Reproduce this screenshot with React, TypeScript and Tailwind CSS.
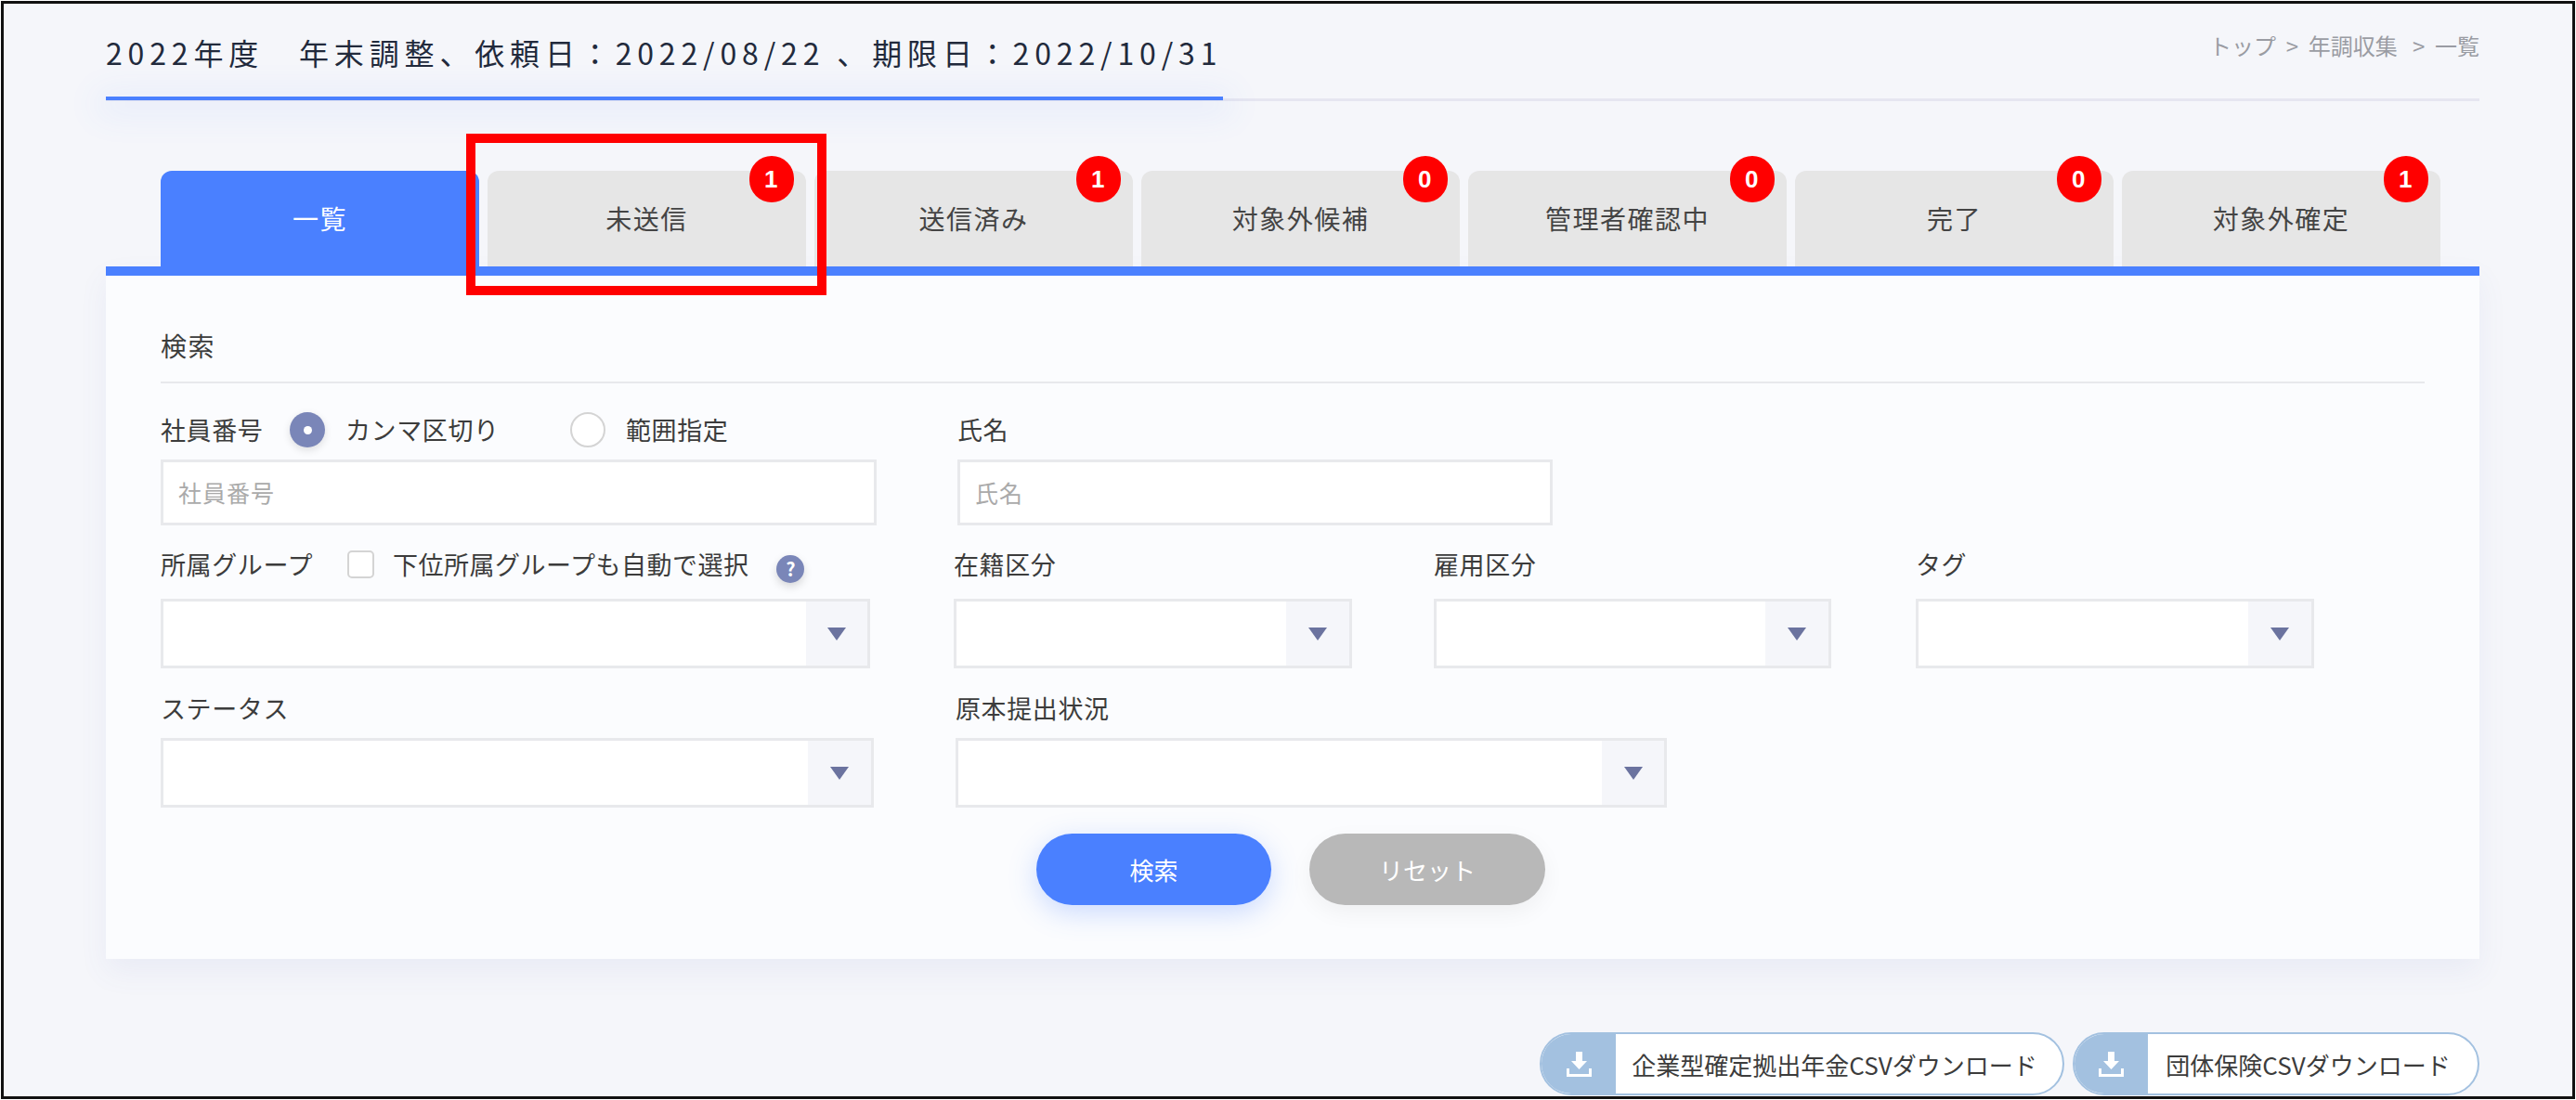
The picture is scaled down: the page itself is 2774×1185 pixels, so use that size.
const font = { fontFamily: '"Noto Sans CJK JP", "Noto Sans", sans-serif' };

const tabs = [
  { label: "一覧", active: true },
  { label: "未送信", count: 1 },
  { label: "送信済み", count: 1 },
  { label: "対象外候補", count: 0 },
  { label: "管理者確認中", count: 0 },
  { label: "完了", count: 0 },
  { label: "対象外確定", count: 1 },
];

const Tab = ({ label, count, active }: { label: string; count?: number; active?: boolean }) => (
  <div
    className={
      active
        ? "relative w-[343px] h-[103px] pb-[2px] flex items-center justify-center rounded-t-[12px] bg-[#4a80ff] text-white text-[28px] tracking-[1.5px]"
        : "relative w-[343px] h-[103px] pb-[2px] flex items-center justify-center rounded-t-[12px] bg-[#e6e6e6] text-[#444444] text-[28px] tracking-[1.5px]"
    }
  >
    {label}
    {count !== undefined && (
      <span className="absolute right-[13px] top-[-16px] w-[48px] h-[50px] rounded-full bg-[#ff0000] text-white text-[26px] font-bold flex items-center justify-center font-['Liberation_Sans']">
        {count}
      </span>
    )}
  </div>
);

const Select = ({ className, arrow }: { className: string; arrow: string }) => (
  <div className={"h-[75px] flex justify-end bg-white border-[3px] border-[#e8e9ec] " + className}>
    <div className={"h-full bg-[#f5f6fa] flex items-center justify-center " + arrow}>
      <svg width="20" height="16" viewBox="0 0 20 16">
        <path d="M0 1h20L10 15z" fill="#6b739f" />
      </svg>
    </div>
  </div>
);

const Label = ({ className, children }: { className?: string; children: React.ReactNode }) => (
  <div className={"text-[27px] leading-[36px] tracking-[0.6px] text-[#3c3c3c] " + (className ?? "")}>{children}</div>
);

const DownloadIcon = () => (
  <svg width="27" height="27" viewBox="0 0 27 27">
    <path d="M10 0h7v10h5l-8.500 9-8.500-9h5z" fill="#ffffff" />
    <path d="M1.500 18v7.500h24V18" fill="none" stroke="#ffffff" strokeWidth="3" />
  </svg>
);

const DownloadButton = ({ label, className, icon }: { label: string; className: string; icon: string }) => (
  <div className={"h-[68px] flex overflow-hidden shrink-0 rounded-full border-[2px] border-[#a3c1e0] bg-white " + className}>
    <div className={"h-full bg-[#a3c1e0] flex items-center justify-center shrink-0 " + icon}>
      <DownloadIcon />
    </div>
    <div className="flex-1 flex items-center justify-center pr-[10px] text-[26px] whitespace-nowrap text-[#3c3c3c]">{label}</div>
  </div>
);

export default function App() {
  return (
    <div style={font} className="relative w-[2774px] h-[1185px] overflow-hidden bg-white p-[1px]">
      <div className="h-[1183px] overflow-hidden border-[3px] border-[#111111] bg-[#f5f6fa] pl-[110px] pr-[100px]">
        <div className="flex justify-between border-b-[3px] border-[#e6e6f0] h-[105px]">
          <div className="w-[1203px] h-[104px] flex flex-col justify-end">
            <div className="text-[32px] leading-[44px] tracking-[5.85px] text-[#222a3c] whitespace-nowrap mb-[26px]">
              2022年度　年末調整、依頼日：2022/08/22 、期限日：2022/10/31
            </div>
            <div className="h-[4px] bg-[#4a80ff] shadow-[0_6px_36px_10px_rgba(74,128,255,0.09)]" />
          </div>
          <div className="pt-[25px] text-[24px] leading-[40px] text-[#9a9ca3] whitespace-pre">トップ  &gt;  年調収集   &gt;  一覧</div>
        </div>

        <div className="pl-[59px] pt-[75px] flex gap-[9px]">
          {tabs.map((t) => (
            <Tab key={t.label} {...t} />
          ))}
        </div>

        <div className="h-[746px] border-t-[10px] border-[#4a80ff] bg-[#fbfcfe] pl-[59px] pr-[59px] pt-[56px] shadow-[0_14px_30px_rgba(80,100,180,0.07)]">
          <div className="h-[60px] border-b-[2px] border-[#e8e9ec] text-[28px] leading-[38px] tracking-[1.5px] text-[#3c3c3c]">検索</div>

          <div className="flex mt-[32px]">
            <div className="w-[771px]">
              <div className="flex items-center h-[36px]">
                <Label className="w-[139px]">社員番号</Label>
                <span className="w-[38px] h-[38px] rounded-full bg-[#7a86b8] flex items-center justify-center shadow-[0_3px_8px_rgba(0,0,0,0.12)]">
                  <span className="w-[9px] h-[9px] rounded-full bg-white" />
                </span>
                <Label className="ml-[22px] w-[242px]">カンマ区切り</Label>
                <span className="w-[38px] h-[38px] rounded-full bg-white border-[2px] border-[#d4d4d4]" />
                <Label className="ml-[22px]">範囲指定</Label>
              </div>
              <div className="mt-[14px] h-[71px] border-[3px] border-[#e8e9ec] bg-white px-[16px] flex items-center text-[25px] tracking-[1px] text-[#aaaaaa]">社員番号</div>
            </div>
            <div className="ml-[87px] w-[641px]">
              <Label className="h-[36px]">氏名</Label>
              <div className="mt-[14px] h-[71px] border-[3px] border-[#e8e9ec] bg-white px-[16px] flex items-center text-[25px] tracking-[1px] text-[#aaaaaa]">氏名</div>
            </div>
          </div>

          <div className="flex mt-[24px]">
            <div className="w-[854px]">
              <div className="flex items-center h-[36px]">
                <Label className="w-[201px]">所属グループ</Label>
                <span className="w-[29px] h-[30px] rounded-[5px] bg-white border-[2px] border-[#d4d4d4]" />
                <Label className="ml-[20px] !tracking-[0.5px] whitespace-nowrap">下位所属グループも自動で選択</Label>
                <span className="ml-[30px] mt-[10px] w-[30px] h-[30px] rounded-full bg-[#7a86b8] text-white text-[20px] font-bold flex items-center justify-center shadow-[0_4px_10px_rgba(0,0,0,0.15)]">?</span>
              </div>
              <Select className="mt-[19px] w-[764px]" arrow="w-[66px]" />
            </div>
            <div className="w-[517px]">
              <Label className="h-[36px]">在籍区分</Label>
              <Select className="mt-[19px] w-[429px]" arrow="w-[68px]" />
            </div>
            <div className="w-[519px]">
              <Label className="h-[36px]">雇用区分</Label>
              <Select className="mt-[19px] w-[428px]" arrow="w-[68px]" />
            </div>
            <div>
              <Label className="h-[36px]">タグ</Label>
              <Select className="mt-[19px] w-[429px]" arrow="w-[68px]" />
            </div>
          </div>

          <div className="flex mt-[25px]">
            <div className="w-[856px]">
              <Label className="h-[36px]">ステータス</Label>
              <Select className="mt-[14px] w-[768px]" arrow="w-[68px]" />
            </div>
            <div>
              <Label className="h-[36px]">原本提出状況</Label>
              <Select className="mt-[14px] w-[766px]" arrow="w-[67px]" />
            </div>
          </div>

          <div className="flex justify-center gap-[41px] mt-[28px] pr-[4px]">
            <div className="w-[253px] h-[77px] rounded-full bg-[#4a80ff] text-white text-[26px] flex items-center justify-center shadow-[0_8px_30px_rgba(74,128,255,0.28)]">検索</div>
            <div className="w-[254px] h-[77px] rounded-full bg-[#b8b8b8] text-white text-[26px] flex items-center justify-center shadow-[0_8px_24px_rgba(0,0,0,0.05)]">リセット</div>
          </div>
        </div>

        <div className="flex justify-end gap-[9px] mt-[79px]">
          <DownloadButton label="企業型確定拠出年金CSVダウンロード" className="w-[565px]" icon="w-[80px]" />
          <DownloadButton label="団体保険CSVダウンロード" className="w-[438px]" icon="w-[79px]" />
        </div>
      </div>

      <div className="absolute left-[502px] top-[144px] w-[388px] h-[174px] border-[10px] border-[#ff0000]" />
    </div>
  );
}
